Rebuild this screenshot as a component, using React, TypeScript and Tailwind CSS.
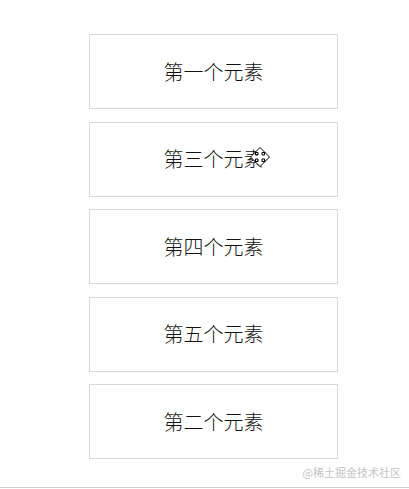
import React from "react";

const items = ["第一个元素", "第三个元素", "第四个元素", "第五个元素", "第二个元素"];

// drag cursor sitting over the second box
function MoveCursor() {
  return (
    <svg width="20" height="20" viewBox="0 0 20 20" className="absolute left-[250px] top-[147px]">
      <path
        d="M10 0.5 L15 5.5 L12 5.5 L12 8 L14.5 8 L14.5 5 L19.5 10 L14.5 15 L14.5 12 L12 12 L12 14.5 L15 14.5 L10 19.5 L5 14.5 L8 14.5 L8 12 L5.5 12 L5.5 15 L0.5 10 L5.5 5 L5.5 8 L8 8 L8 5.5 L5 5.5 Z"
        fill="#fff"
        stroke="#000"
        strokeWidth="1"
      />
    </svg>
  );
}

export default function App() {
  return (
    <div className="relative h-[489px] w-[409px] overflow-hidden bg-white font-['Noto_Sans_CJK_SC',sans-serif]">
      <div className="flex flex-col gap-[12.5px] pt-[34px] pl-[89px]">
        {items.map((t) => (
          <div
            key={t}
            className="flex h-[75px] w-[249px] items-center justify-center border border-[#d7d9dc] text-[20px] font-light text-[#111]"
          >
            {t}
          </div>
        ))}
      </div>
      <MoveCursor />
      <div className="absolute right-[8px] bottom-[9px] text-[11px] text-[#c4c4c4]">@稀土掘金技术社区</div>
      <div className="absolute bottom-[1px] left-0 h-px w-full bg-[#cfcfcf]" />
    </div>
  );
}
